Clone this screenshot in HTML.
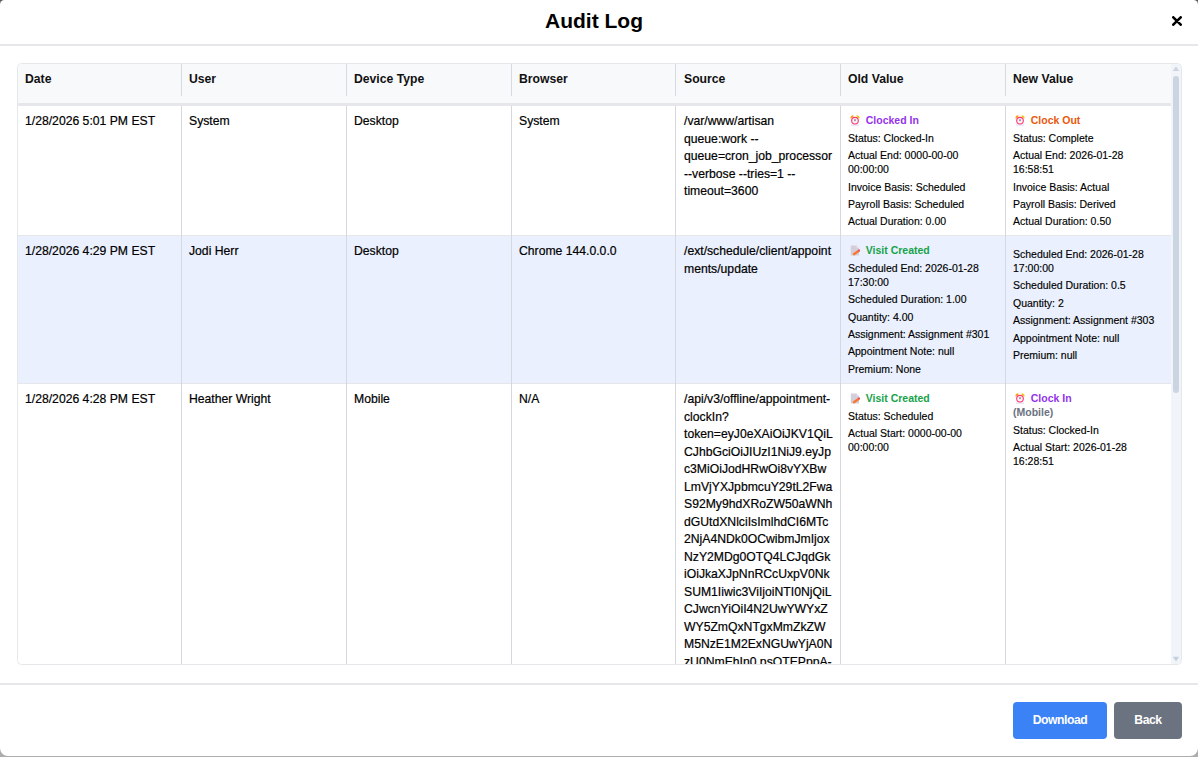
<!DOCTYPE html>
<html><head><meta charset="utf-8">
<style>
*{box-sizing:border-box;margin:0;padding:0}
html,body{width:1198px;height:757px;overflow:hidden}
body{background:#adadad;font-family:"Liberation Sans",sans-serif;color:#000;position:relative}
.tl,.tr{position:absolute;top:0;width:12px;height:12px;background:#5a5a5a}
.tl{left:0}.tr{right:0}
.modal{position:absolute;left:0;top:0;width:1198px;height:756px;background:#fff;border-radius:4.5px 4.5px 8px 8px;overflow:hidden}
.title{position:absolute;left:-5px;width:1198px;top:9px;text-align:center;font-weight:bold;font-size:21px;line-height:24px;color:#000}
.close{position:absolute;left:1172px;top:16px;width:10px;height:10px}
.hb{position:absolute;left:0;top:44px;width:1198px;height:2px;background:#e5e7eb}
.fb{position:absolute;left:0;top:683px;width:1198px;height:2px;background:#e5e7eb}
.wrap{position:absolute;left:17px;top:63px;width:1165px;height:602px;border:1px solid #e5e7eb;border-radius:4.5px;overflow:hidden;background:#fff}
.thead{position:absolute;left:0;top:0;width:1153px;height:42px;background:#f8f9fb;border-bottom:3px solid #e5e7eb}
.th{position:absolute;top:0;height:32px;font-weight:bold;font-size:12.2px;line-height:14px;padding-top:8px;color:#111}
.thd{position:absolute;top:0;width:1px;height:32px;background:#d7dae0}
.row{position:absolute;left:0;width:1153px;border-bottom:1px solid #e5e7eb}
.hl{background:#eaf0fd}
.cd{position:absolute;top:42px;width:1px;height:560px;background:#d5d9df}
.c{position:absolute;font-size:12.2px;line-height:17.5px;color:#000;-webkit-text-stroke:0.2px #000}
.v{position:absolute;font-size:10.5px;line-height:14px;color:#000;-webkit-text-stroke:0.15px #000}
.v div{margin-bottom:3.45px}
.v .t{font-weight:bold;margin-bottom:3.7px;white-space:nowrap;line-height:14px;-webkit-text-stroke:0}
.v .t svg{vertical-align:-1.7px;margin-left:2.2px;margin-right:5.6px}
.pur{color:#9333ea}.org{color:#ea580c}.grn{color:#16a34a}.gry{color:#6b7280}
.sb{position:absolute;left:1153px;top:0;width:10px;height:600px;background:#f1f4f8}
.thumb{position:absolute;left:2px;top:12px;width:6px;height:317px;border-radius:3px;background:#cbd5e1}
.btn{position:absolute;top:702px;height:37px;border-radius:4px;color:#fff;font-weight:bold;font-size:12.2px;line-height:37px;text-align:center;letter-spacing:-0.45px}
</style></head><body>
<div class="tl"></div><div class="tr"></div>
<div class="modal">
  <div class="title">Audit Log</div>
  <svg class="close" viewBox="0 0 10 10"><path d="M1.3 1.3L8.7 8.7M8.7 1.3L1.3 8.7" stroke="#000" stroke-width="2.6" stroke-linecap="round"/></svg>
  <div class="hb"></div>

  <div class="wrap">
    <div class="thead">
      <div class="th" style="left:7px">Date</div>
      <div class="th" style="left:171px">User</div>
      <div class="th" style="left:336px">Device Type</div>
      <div class="th" style="left:501px">Browser</div>
      <div class="th" style="left:666px">Source</div>
      <div class="th" style="left:830px">Old Value</div>
      <div class="th" style="left:995px">New Value</div>
      <div class="thd" style="left:163px"></div>
      <div class="thd" style="left:328px"></div>
      <div class="thd" style="left:493px"></div>
      <div class="thd" style="left:657px"></div>
      <div class="thd" style="left:822px"></div>
      <div class="thd" style="left:987px"></div>
    </div>

    <div class="row" style="top:42px;height:130px"></div>
    <div class="row hl" style="top:172px;height:148px"></div>
    <div class="row" style="top:320px;height:300px;border-bottom:none"></div>

    <div class="cd" style="left:163px"></div>
    <div class="cd" style="left:328px"></div>
    <div class="cd" style="left:493px"></div>
    <div class="cd" style="left:657px"></div>
    <div class="cd" style="left:822px"></div>
    <div class="cd" style="left:987px"></div>

    <!-- row 1 -->
    <div class="c" style="left:7px;top:49px">1/28/2026 5:01 PM EST</div>
    <div class="c" style="left:171px;top:49px">System</div>
    <div class="c" style="left:336px;top:49px">Desktop</div>
    <div class="c" style="left:501px;top:49px">System</div>
    <div class="c" style="left:666px;top:49px">/var/www/artisan<br>queue:work --<br>queue=cron_job_processor<br>--verbose --tries=1 --<br>timeout=3600</div>
    <div class="v" style="left:830px;top:49px">
      <div class="t pur"><svg width="10" height="11" viewBox="0 0 10 11"><path d="M0.4 3.2A2.6 2.6 0 0 1 3.4 0.4L3.6 1.4L1.2 3.4Z" fill="#f5a31c"/><path d="M9.6 3.2A2.6 2.6 0 0 0 6.6 0.4L6.4 1.4L8.8 3.4Z" fill="#f2c41e"/><rect x="1" y="9.6" width="8" height="0.9" fill="#dcccf2"/><circle cx="5" cy="5.6" r="3.9" fill="#ff3d6c"/><circle cx="5" cy="5.7" r="2.75" fill="#f8f2fb"/><rect x="4.55" y="4.2" width="0.9" height="1.9" fill="#4a3050"/></svg>Clocked In</div>
      <div>Status: Clocked-In</div>
      <div>Actual End: 0000-00-00<br>00:00:00</div>
      <div>Invoice Basis: Scheduled</div>
      <div>Payroll Basis: Scheduled</div>
      <div>Actual Duration: 0.00</div>
    </div>
    <div class="v" style="left:995px;top:49px">
      <div class="t org"><svg width="10" height="11" viewBox="0 0 10 11"><path d="M0.4 3.2A2.6 2.6 0 0 1 3.4 0.4L3.6 1.4L1.2 3.4Z" fill="#f5a31c"/><path d="M9.6 3.2A2.6 2.6 0 0 0 6.6 0.4L6.4 1.4L8.8 3.4Z" fill="#f2c41e"/><rect x="1" y="9.6" width="8" height="0.9" fill="#dcccf2"/><circle cx="5" cy="5.6" r="3.9" fill="#ff3d6c"/><circle cx="5" cy="5.7" r="2.75" fill="#f8f2fb"/><rect x="4.55" y="4.2" width="0.9" height="1.9" fill="#4a3050"/></svg>Clock Out</div>
      <div>Status: Complete</div>
      <div>Actual End: 2026-01-28<br>16:58:51</div>
      <div>Invoice Basis: Actual</div>
      <div>Payroll Basis: Derived</div>
      <div>Actual Duration: 0.50</div>
    </div>

    <!-- row 2 -->
    <div class="c" style="left:7px;top:179px">1/28/2026 4:29 PM EST</div>
    <div class="c" style="left:171px;top:179px">Jodi Herr</div>
    <div class="c" style="left:336px;top:179px">Desktop</div>
    <div class="c" style="left:501px;top:179px">Chrome 144.0.0.0</div>
    <div class="c" style="left:666px;top:179px">/ext/schedule/client/appoint<br>ments/update</div>
    <div class="v" style="left:830px;top:179px">
      <div class="t grn"><svg width="10" height="11" viewBox="0 0 10 11"><path d="M0.8 0.6H6.6L9 3V10.6H0.8Z" fill="#d3ceda"/><path d="M6.6 0.6L9 3H6.6Z" fill="#e9e6ee"/><path d="M3.2 9.7L8.5 6" stroke="#f7782c" stroke-width="2.3"/><path d="M8.3 6.1L9.8 5" stroke="#f04a5a" stroke-width="2.3"/></svg>Visit Created</div>
      <div>Scheduled End: 2026-01-28<br>17:30:00</div>
      <div>Scheduled Duration: 1.00</div>
      <div>Quantity: 4.00</div>
      <div>Assignment: Assignment #301</div>
      <div>Appointment Note: null</div>
      <div>Premium: None</div>
    </div>
    <div class="v" style="left:995px;top:183px">
      <div>Scheduled End: 2026-01-28<br>17:00:00</div>
      <div>Scheduled Duration: 0.5</div>
      <div>Quantity: 2</div>
      <div>Assignment: Assignment #303</div>
      <div>Appointment Note: null</div>
      <div>Premium: null</div>
    </div>

    <!-- row 3 -->
    <div class="c" style="left:7px;top:327px">1/28/2026 4:28 PM EST</div>
    <div class="c" style="left:171px;top:327px">Heather Wright</div>
    <div class="c" style="left:336px;top:327px">Mobile</div>
    <div class="c" style="left:501px;top:327px">N/A</div>
    <div class="c" style="left:666px;top:327px">/api/v3/offline/appointment-<br>clockIn?<br>token=eyJ0eXAiOiJKV1QiL<br>CJhbGciOiJIUzI1NiJ9.eyJp<br>c3MiOiJodHRwOi8vYXBw<br>LmVjYXJpbmcuY29tL2Fwa<br>S92My9hdXRoZW50aWNh<br>dGUtdXNlciIsImlhdCI6MTc<br>2NjA4NDk0OCwibmJmIjox<br>NzY2MDg0OTQ4LCJqdGk<br>iOiJkaXJpNnRCcUxpV0Nk<br>SUM1Iiwic3ViIjoiNTI0NjQiL<br>CJwcnYiOiI4N2UwYWYxZ<br>WY5ZmQxNTgxMmZkZW<br>M5NzE1M2ExNGUwYjA0N<br>zU0NmEhIn0.psOTEPppA-<br>Lq9wXkR2</div>
    <div class="v" style="left:830px;top:327px">
      <div class="t grn"><svg width="10" height="11" viewBox="0 0 10 11"><path d="M0.8 0.6H6.6L9 3V10.6H0.8Z" fill="#d3ceda"/><path d="M6.6 0.6L9 3H6.6Z" fill="#e9e6ee"/><path d="M3.2 9.7L8.5 6" stroke="#f7782c" stroke-width="2.3"/><path d="M8.3 6.1L9.8 5" stroke="#f04a5a" stroke-width="2.3"/></svg>Visit Created</div>
      <div>Status: Scheduled</div>
      <div>Actual Start: 0000-00-00<br>00:00:00</div>
    </div>
    <div class="v" style="left:995px;top:327px">
      <div class="t pur" style="margin-bottom:0"><svg width="10" height="11" viewBox="0 0 10 11"><path d="M0.4 3.2A2.6 2.6 0 0 1 3.4 0.4L3.6 1.4L1.2 3.4Z" fill="#f5a31c"/><path d="M9.6 3.2A2.6 2.6 0 0 0 6.6 0.4L6.4 1.4L8.8 3.4Z" fill="#f2c41e"/><rect x="1" y="9.6" width="8" height="0.9" fill="#dcccf2"/><circle cx="5" cy="5.6" r="3.9" fill="#ff3d6c"/><circle cx="5" cy="5.7" r="2.75" fill="#f8f2fb"/><rect x="4.55" y="4.2" width="0.9" height="1.9" fill="#4a3050"/></svg>Clock In</div>
      <div class="t gry">(Mobile)</div>
      <div>Status: Clocked-In</div>
      <div>Actual Start: 2026-01-28<br>16:28:51</div>
    </div>

    <div class="sb"><div class="thumb"></div><svg style="position:absolute;left:0;top:0" width="10" height="600"><path d="M5 2.5L8.2 7H1.8Z" fill="#cbd4df"/><path d="M5 597.4L8.2 592.8H1.8Z" fill="#c6d0dc"/></svg></div>
  </div>

  <div class="fb"></div>
  <div class="btn" style="left:1013px;width:94px;background:#3b82f6">Download</div>
  <div class="btn" style="left:1114px;width:68px;background:#6b7280">Back</div>
</div>
</body></html>
